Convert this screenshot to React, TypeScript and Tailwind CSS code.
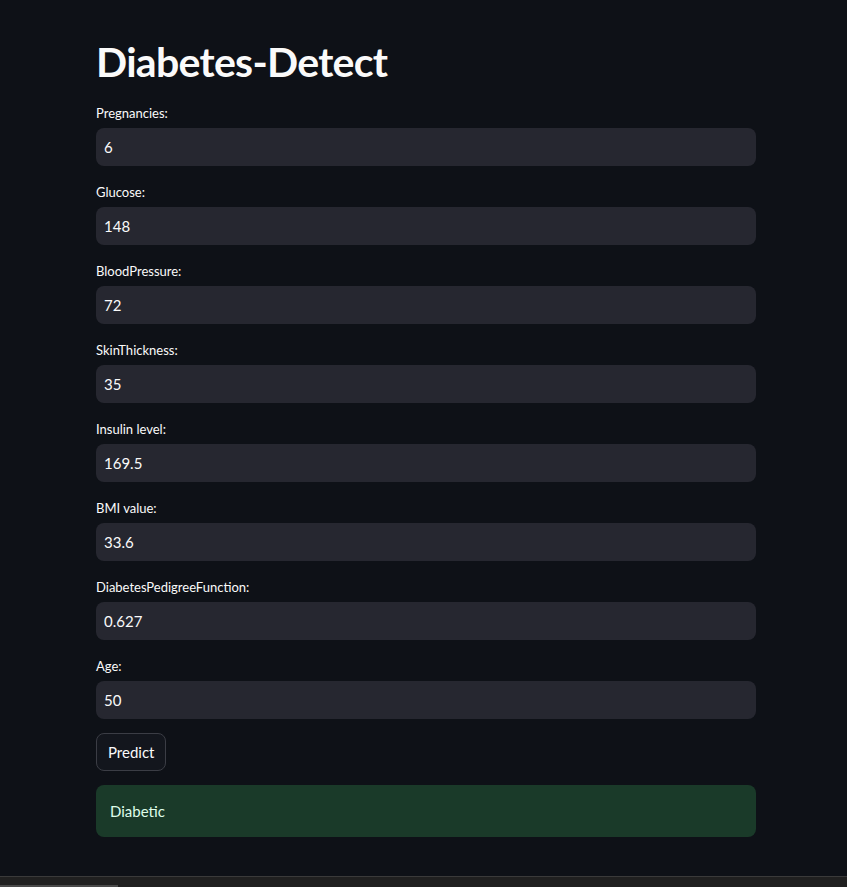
import { useState } from 'react';

const FIELDS = [
  { label: "Pregnancies:", value: "6" },
  { label: "Glucose:", value: "148" },
  { label: "BloodPressure:", value: "72" },
  { label: "SkinThickness:", value: "35" },
  { label: "Insulin level:", value: "169.5" },
  { label: "BMI value:", value: "33.6" },
  { label: "DiabetesPedigreeFunction:", value: "0.627" },
  { label: "Age:", value: "50" },
];

function Field({ label, value }: { label: string; value: string }) {
  const [v, setV] = useState(value);
  return (
    <div className="flex flex-col">
      <label className="h-[25px] text-[13px] leading-[18px] text-[#fafafa] pt-[1px]">{label}</label>
      <input
        value={v}
        onChange={(e) => setV(e.target.value)}
        className="h-[38px] w-full rounded-lg bg-[#262730] px-2 text-[15px] text-[#fafafa] outline-none"
      />
    </div>
  );
}

export default function App() {
  return (
    <div
      className="relative min-h-[887px] w-full bg-[#0e1117] text-[#fafafa]"
      style={{ fontFamily: "Lato, 'Noto Sans', sans-serif" }}
    >
      <main className="ml-[96px] flex w-[660px] flex-col gap-4 pt-[35px] pb-[40px]">
        <h1 className="h-[52px] text-[41px] font-bold leading-[54px] tracking-[-0.7px]">Diabetes-Detect</h1>
        {FIELDS.map((f) => (
          <Field key={f.label} label={f.label} value={f.value} />
        ))}
        <div className="-mt-[2px]">
          <button className="h-[38px] rounded-lg border border-[#3b3d45] bg-[#13161d] px-[11px] text-[15px] text-[#fafafa]">
            Predict
          </button>
        </div>
        <div className="-mt-[2px] rounded-lg bg-[#1a3a29] px-[14px] py-[16px] text-[15px] leading-[20px] text-[#dffde9]">
          Diabetic
        </div>
      </main>

      {/* browser scrollbar strip at the bottom */}
      <div className="absolute bottom-0 left-0 right-0 h-[11px] border-t border-[#3a3a3a] bg-[#202020]">
        <div className="h-[2px] w-[118px] translate-y-[8px] bg-[#4a4a4a]" />
      </div>
    </div>
  );
}
